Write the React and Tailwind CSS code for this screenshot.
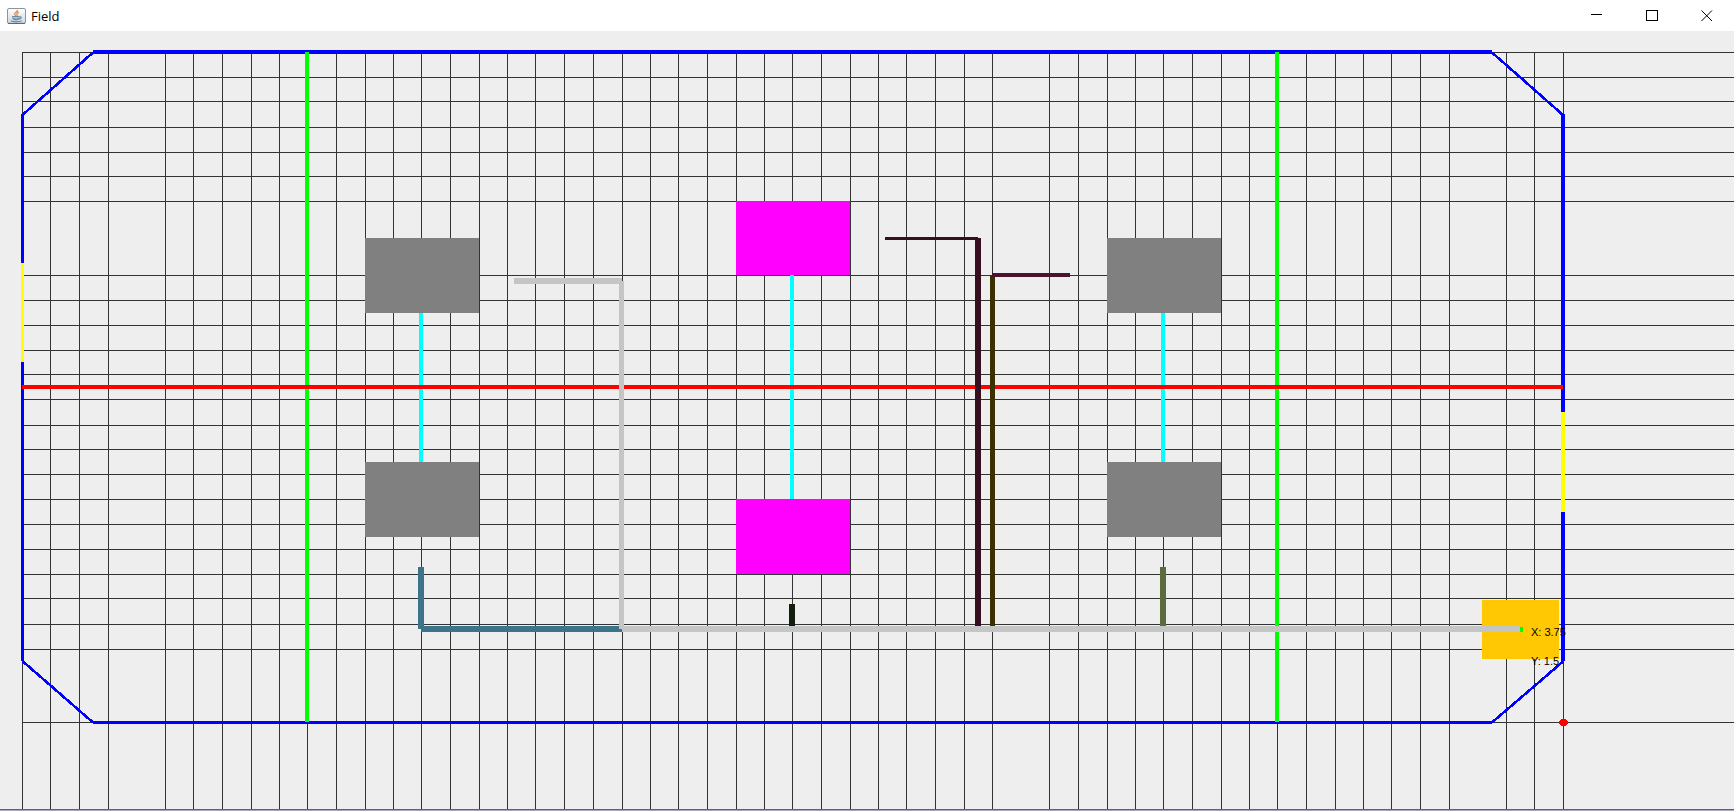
const COLUMNS = [
  22, 50, 79, 108, 165, 193, 222, 251, 279, 307, 336, 365, 393, 421, 450, 479,
  507, 535, 564, 593, 622, 650, 678, 707, 736, 764, 792, 821, 850, 878, 906,
  935, 964, 992, 1049, 1078, 1107, 1135, 1163, 1192, 1221, 1249, 1277, 1306,
  1335, 1363, 1391, 1420, 1449, 1506, 1534, 1563,
];

const ROWS = [
  52, 77, 101, 127, 152, 176, 201, 275, 300, 325, 350, 374, 399, 425, 449, 474,
  499, 524, 549, 574, 598, 624, 649, 722,
];

// Each bar is [left, top, right, bottom, colour]; later bars cover earlier ones.
const BARS = [
  // perimeter walls
  [93, 50, 1492, 54, "#0000ff"],
  [21, 114, 24, 661, "#0000ff"],
  [1561, 114, 1565, 661, "#0000ff"],
  [93, 721, 1492, 724, "#0000ff"],
  // exchange and portal openings
  [21, 263, 24, 362, "#ffff00"],
  [1561, 412, 1565, 512, "#ffff00"],
  // auto lines
  [305, 52, 309, 722, "#00ff00"],
  [1275, 52, 1279, 722, "#00ff00"],
  // balance arms
  [419, 313, 423, 462, "#00ffff"],
  [790, 275, 794, 499, "#00ffff"],
  [1161, 313, 1165, 462, "#00ffff"],
  // centre line
  [22, 385, 1563, 389, "#ff0000"],
  // plates
  [365, 238, 479, 313, "#808080"],
  [365, 462, 479, 537, "#808080"],
  [1107, 238, 1221, 313, "#808080"],
  [1107, 462, 1221, 537, "#808080"],
  [736, 201, 850, 275, "#ff00ff"],
  [736, 499, 850, 574, "#ff00ff"],
  // robot
  [1482, 600, 1559, 659, "#ffc803"],
  // paths
  [421, 626, 622, 632, "#3e7489"],
  [418, 567, 424, 629, "#3e7489"],
  [514, 278, 622, 284, "#c5c5c5"],
  [619, 281, 624, 629, "#c5c5c5"],
  [789, 604, 795, 629, "#141e0e"],
  [885, 237, 978, 240, "#370e20"],
  [975, 238, 981, 629, "#370e20"],
  [990, 275, 995, 629, "#3c3000"],
  [992, 273, 1070, 277, "#4a142e"],
  [1160, 567, 1166, 629, "#5b6b3a"],
  [622, 626, 1520, 632, "#c4c6c5"],
  [1520, 627, 1523, 632, "#00ff00"],
];

const CORNERS = [
  "M23 114.5L93 52.5",
  "M1492 52.5L1563 115",
  "M23 661.5L93 722.5",
  "M1492 722.5L1563 661.5",
];

function JavaIcon() {
  return (
    <svg className="h-4 w-5 shrink-0" viewBox="0 0 20 16" aria-hidden="true">
      <defs>
        <linearGradient id="tile" x1="0" y1="0" x2="0" y2="1">
          <stop offset="0" stopColor="#ffffff" />
          <stop offset="1" stopColor="#cfd6dc" />
        </linearGradient>
      </defs>
      <rect x="0.5" y="0.5" width="18" height="15" rx="1.5" fill="url(#tile)" stroke="#8796a3" />
      <path d="M1 15.4H18" stroke="#4f6a80" />
      <path d="M10.6 2C10.8 4 7.3 4.6 7.6 6.2C7.8 7 8.6 7.3 8.8 8M11.8 4.2C10 5 9.4 5.6 10.2 6.6C10.6 7.2 10.2 7.6 9.8 8" fill="none" stroke="#e58a4a" strokeWidth="1.3" />
      <path d="M5 8.7H12.6M5.8 9.6C6 11.4 7 11.8 9.2 11.8C11.2 11.8 12 11.2 12.3 9.6M12.8 8.8C15 8.6 14.6 10.8 12.2 10.8M4 12.8C6 14.2 12.6 14.2 14.6 12.8" fill="none" stroke="#6c8ba3" strokeWidth="1.2" />
      <path d="M6.8 10.3H11.5" stroke="#7e9ab0" strokeWidth="1" />
    </svg>
  );
}

function WindowButton({ label, children }) {
  return (
    <button type="button" aria-label={label} className="flex h-full w-[55px] items-center justify-center text-black hover:bg-gray-200">
      <svg className="h-3 w-3" viewBox="0 0 12 12" fill="none" stroke="currentColor">
        {children}
      </svg>
    </button>
  );
}

function TitleBar() {
  return (
    <header className="flex h-[31px] shrink-0 items-center bg-white pl-[7px]">
      <JavaIcon />
      <h1 className="ml-1 flex-1 font-['Open_Sans','Noto_Sans',sans-serif] text-[13px] leading-4 text-black">Field</h1>
      <WindowButton label="Minimize">
        <path d="M0 4.5H11" shapeRendering="crispEdges" />
      </WindowButton>
      <WindowButton label="Maximize">
        <rect x="0.5" y="0.5" width="11" height="10" shapeRendering="crispEdges" />
      </WindowButton>
      <WindowButton label="Close">
        <path d="M0.5 0.5L11 11M11 0.5L0.5 11" />
      </WindowButton>
    </header>
  );
}

function Field() {
  return (
    <svg
      className="min-h-0 w-full flex-1"
      viewBox="0 31 1734 778"
      preserveAspectRatio="xMinYMin meet"
      shapeRendering="crispEdges"
      role="img"
      aria-label="Field map"
    >
      <g fill="#333333">
        {COLUMNS.map((x) => (
          <rect key={x} x={x} y="52" width="1" height="757" />
        ))}
        {ROWS.map((y) => (
          <rect key={y} x="22" y={y} width="1712" height="1" />
        ))}
      </g>
      {CORNERS.map((d) => (
        <path key={d} d={d} fill="none" stroke="#0000ff" strokeWidth="2.6" />
      ))}
      {BARS.map(([left, top, right, bottom, color]) => (
        <rect key={`${left}-${top}-${right}-${color}`} x={left} y={top} width={right - left} height={bottom - top} fill={color} />
      ))}
      <ellipse cx="1563.5" cy="722.5" rx="4.5" ry="3.5" fill="#ff0000" />
      <g className="font-['Liberation_Sans',sans-serif] text-[11px]" fill="#000000">
        <text x="1531" y="636">X: 3.75</text>
        <text x="1531" y="665">Y: 1.5</text>
      </g>
    </svg>
  );
}

export default function App() {
  return (
    <div className="flex h-screen flex-col overflow-hidden border-b border-[#aaaac8] bg-[#eeeeee]">
      <TitleBar />
      <main className="flex min-h-0 flex-1 flex-col border-b border-[#5f5b8a]">
        <Field />
      </main>
    </div>
  );
}
